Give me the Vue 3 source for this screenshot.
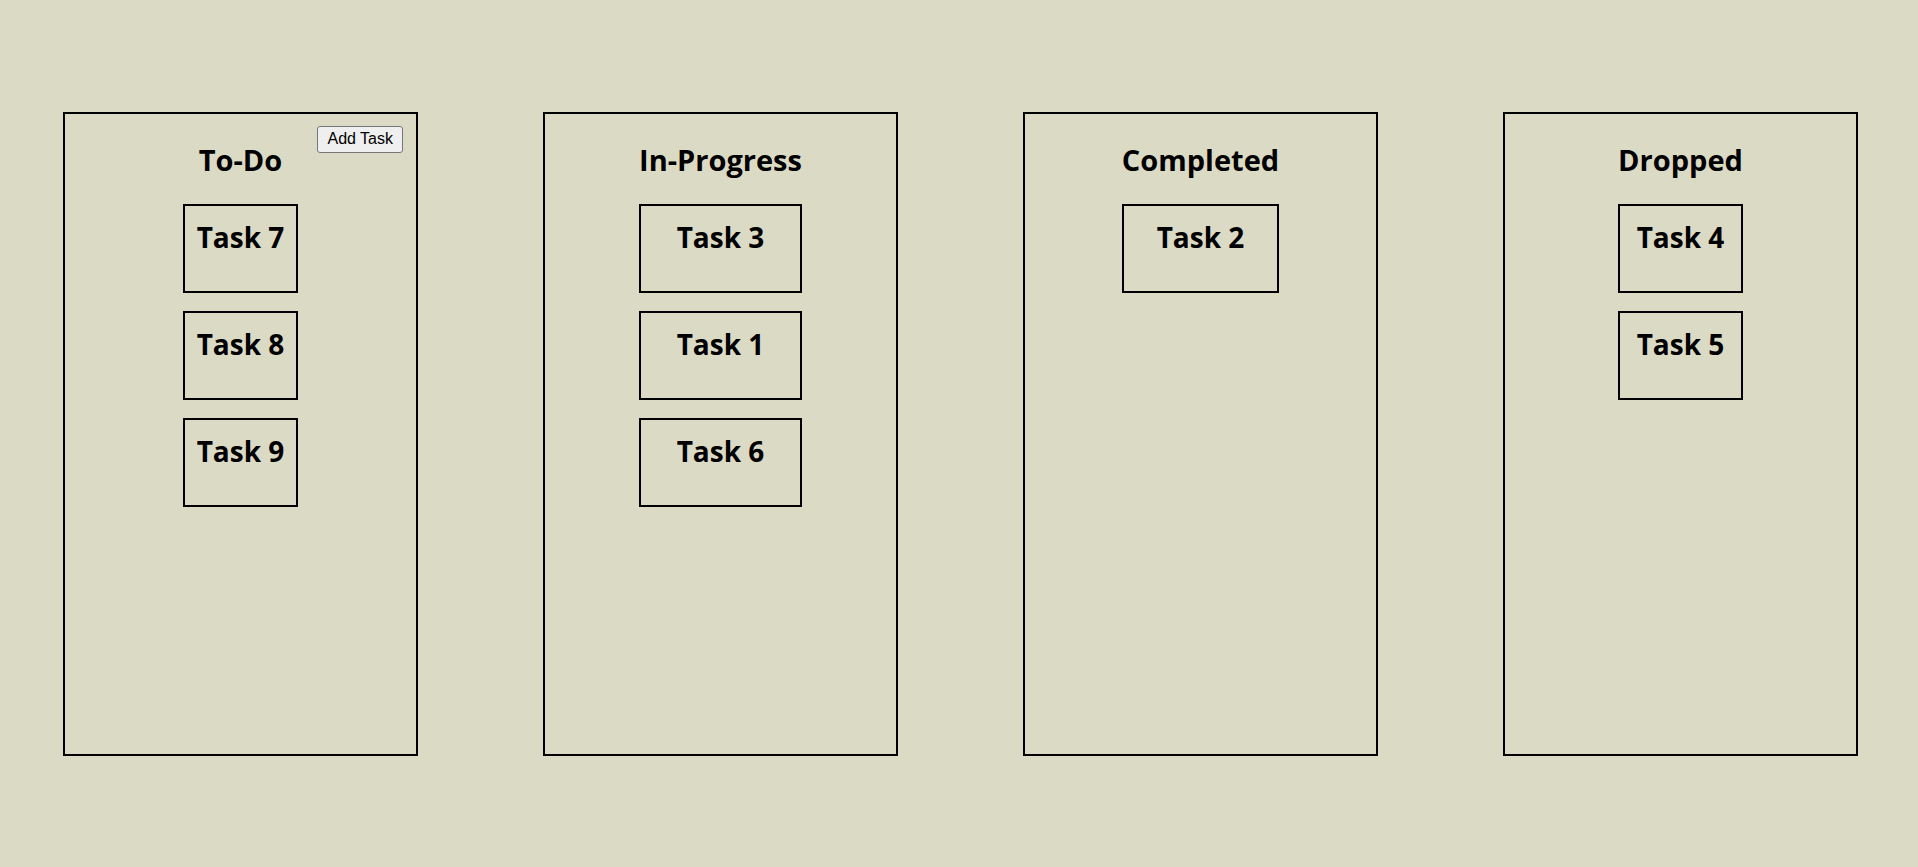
<script setup>
import { ref } from 'vue'

const columns = ref([
  { title: 'To-Do', canAdd: true, tasks: ['Task 7', 'Task 8', 'Task 9'] },
  { title: 'In-Progress', canAdd: false, tasks: ['Task 3', 'Task 1', 'Task 6'] },
  { title: 'Completed', canAdd: false, tasks: ['Task 2'] },
  { title: 'Dropped', canAdd: false, tasks: ['Task 4', 'Task 5'] },
])

function addTask(column) {
  const total = columns.value.reduce((sum, c) => sum + c.tasks.length, 0)
  column.tasks.push(`Task ${total + 1}`)
}
</script>

<template>
  <main class="board">
    <section v-for="column in columns" :key="column.title" class="column">
      <button v-if="column.canAdd" type="button" class="add" @click="addTask(column)">Add Task</button>
      <div class="stack">
        <h2 class="title">{{ column.title }}</h2>
        <ul class="tasks">
          <li v-for="task in column.tasks" :key="task" class="task">{{ task }}</li>
        </ul>
      </div>
    </section>
  </main>
</template>

<style>
body {
  margin: 0;
  background: #dbdac5;
}
</style>

<style scoped>
.board {
  box-sizing: border-box;
  display: grid;
  grid-template-columns: repeat(4, 1fr);
  gap: 125px;
  min-height: 100vh;
  padding: 112px 60px 111px 63px;
  color: #000;
  font-family: "Segoe UI", "Open Sans", "Noto Sans", sans-serif;
  font-size: 29px;
  font-weight: 700;
  line-height: 40px;
}

.column {
  position: relative;
  display: flex;
  justify-content: center;
  align-items: flex-start;
  border: 2px solid #000;
}

.add {
  position: absolute;
  top: 12px;
  right: 13px;
  padding: 2px 9px 3px;
  border: 1px solid #767676;
  border-radius: 3px;
  background: #efefef;
  color: #000;
  font-family: Arial, "Liberation Sans", sans-serif;
  font-size: 16px;
  line-height: 20px;
}

.stack {
  padding-top: 26px;
  text-align: center;
}

.title {
  margin: 0 0 24px;
  font-size: inherit;
  font-weight: inherit;
}

.tasks {
  display: grid;
  gap: 18px;
  margin: 0;
  padding: 0;
  list-style: none;
}

.task {
  box-sizing: border-box;
  min-height: 89px;
  padding: 11px 12px;
  border: 2px solid #000;
  font-size: 28px;
}
</style>
